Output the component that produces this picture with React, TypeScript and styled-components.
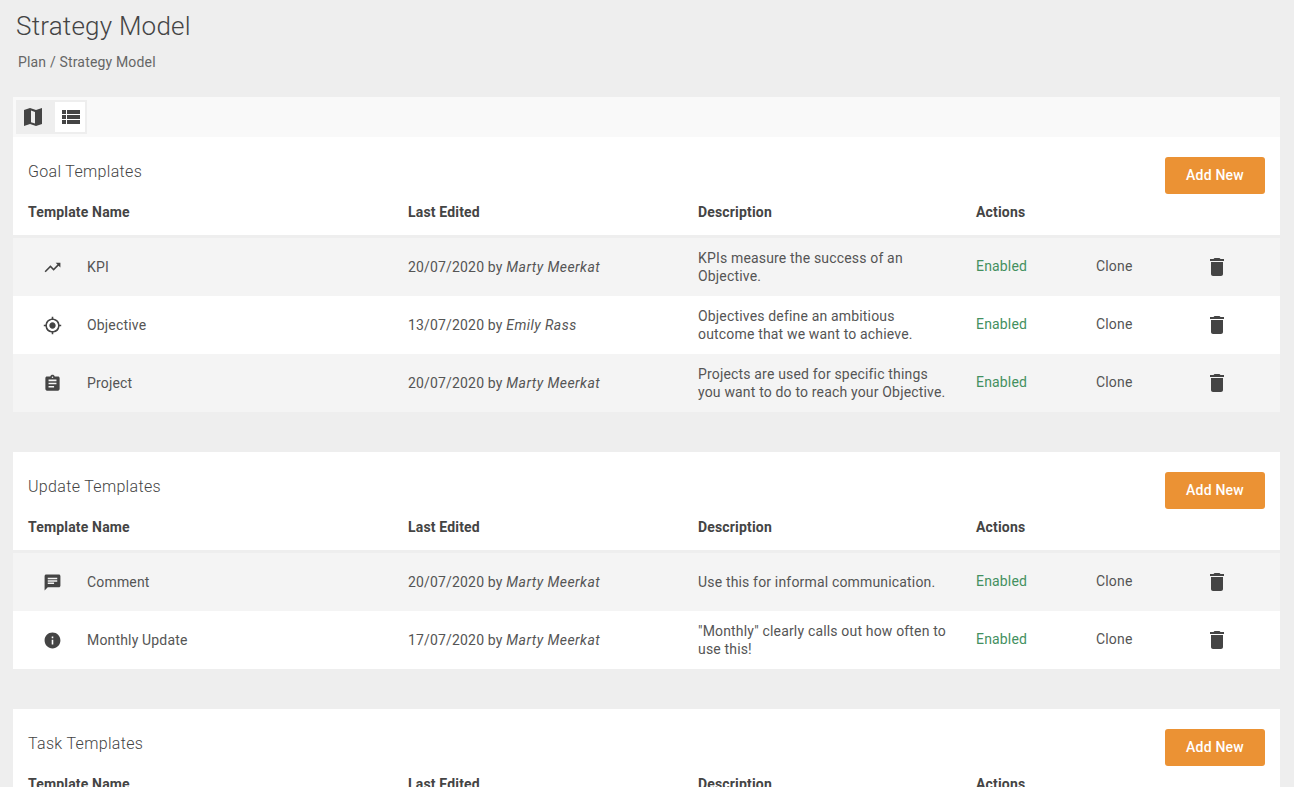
import React from "react";
import styled, { createGlobalStyle } from "styled-components";
import { MdTrendingUp, MdGpsFixed, MdAssignment, MdChat, MdInfo, MdDelete } from "react-icons/md";

const Global = createGlobalStyle`
  html, body { margin: 0; padding: 0; height: 100%; overflow: hidden; background: #eeeeee; }
  body { font-family: Roboto, "Liberation Sans", sans-serif; color: #444444; font-size: 14px; letter-spacing: 0.17px; }
`;
const Page = styled.div`
  height: 787px;
  overflow: hidden;
  padding: 0 14px 0 13px;
`;
const Title = styled.h1`
  margin: 0;
  padding: 9px 0 0 3px;
  font-size: 26px;
  line-height: 34px;
  font-weight: 300;
  letter-spacing: 0.22px;
  color: #444;
`;
const Crumbs = styled.div`
  padding: 11px 0 0 5px;
  height: 54px;
  box-sizing: border-box;
  line-height: 17px;
  font-size: 14px;
  color: #666;
`;
const Toolbar = styled.div`
  height: 40px;
  background: #f9f9f9;
  display: flex;
  align-items: center;
  padding-left: 3px;
`;
const ToggleGroup = styled.div`
  display: flex;
  height: 34px;
`;
const Toggle = styled.button<{ $active?: boolean }>`
  width: ${p => (p.$active ? 37 : 34)}px;
  height: 34px;
  padding: ${p => (p.$active ? "0 3px 0 0" : "0 0 0 2px")};
  border: 2px solid #eeeeee;
  background: ${p => (p.$active ? "#eeeeee" : "#ffffff")};
  color: #444;
  display: flex;
  align-items: center;
  justify-content: center;
  svg { width: 24px; height: 24px; flex: none; fill: currentColor; }
`;
const Section = styled.section`
  background: #fff;
  margin-bottom: 40px;
`;
const SectionHead = styled.div`
  display: flex;
  justify-content: space-between;
  align-items: flex-start;
  padding: 20px 15px 0;
  height: 57px;
  box-sizing: border-box;
`;
const SectionTitle = styled.h2`
  margin: 5px 0 0;
  font-size: 16px;
  line-height: 19px;
  font-weight: 300;
  letter-spacing: 0.33px;
  color: #444;
`;
const AddButton = styled.button`
  width: 100px;
  height: 37px;
  padding: 0 0 2px;
  border: 0;
  border-radius: 3px;
  background: #eb9234;
  color: #fff;
  font: 500 14px Roboto, sans-serif;
  letter-spacing: 0.2px;
`;
const Row = styled.div`
  display: grid;
  grid-template-columns: 380px 290px 278px 120px 109px 1fr;
  padding-left: 15px;
  align-items: center;
`;
const HeadRow = styled(Row)`
  height: 44px;
  padding-bottom: 6px;
  box-sizing: border-box;
  border-bottom: 3px solid #eeeeee;
  font-weight: 700;
  font-size: 14px;
  color: #444;
`;
const BodyRow = styled(Row)`
  height: 58px;
  &:nth-child(odd) { background: #f4f4f4; }
`;
const Rows = styled.div``;
const NameCell = styled.div`
  display: flex;
  align-items: center;
  color: #555;
  svg { width: 19px; height: 19px; color: #444; margin: 0 25px 0 15px; flex: none; }
`;
const Edited = styled.div`
  color: #555;
  em { color: #555; font-style: italic; letter-spacing: 0.45px; }
`;
const Desc = styled.div`
  width: 252px;
  line-height: 18px;
  color: #555;
`;
const Enabled = styled.div`
  color: #43905f;
  margin-top: -2px;
`;
const Clone = styled.div`
  color: #555;
  margin-top: -2px;
`;
const Trash = styled.div`
  display: flex;
  margin-top: -1px;
  color: #444;
  svg { width: 24px; height: 24px; }
`;

const MapIcon = () => (
  <svg viewBox="0 0 24 24">
    <path fillRule="evenodd" d="M3 5 9 3l6 2 6-2v16l-6 2-6-2-6 2zM10 5.6v11.6l4 1.3V6.9z" />
  </svg>
);
const ListIcon = () => (
  <svg viewBox="0 0 24 24">
    <path d="M3 14h4v-4H3v4zm0 5h4v-4H3v4zM3 9h4V5H3v4zm5 5h13v-4H8v4zm0 5h13v-4H8v4zM8 5v4h13V5H8z" />
  </svg>
);

type T = { icon: React.ReactNode; name: string; date: string; by: string; desc: string };
const goals: T[] = [
  { icon: <MdTrendingUp />, name: "KPI", date: "20/07/2020", by: "Marty Meerkat", desc: "KPIs measure the success of an Objective." },
  { icon: <MdGpsFixed />, name: "Objective", date: "13/07/2020", by: "Emily Rass", desc: "Objectives define an ambitious outcome that we want to achieve." },
  { icon: <MdAssignment />, name: "Project", date: "20/07/2020", by: "Marty Meerkat", desc: "Projects are used for specific things you want to do to reach your Objective." },
];
const updates: T[] = [
  { icon: <MdChat />, name: "Comment", date: "20/07/2020", by: "Marty Meerkat", desc: "Use this for informal communication." },
  { icon: <MdInfo />, name: "Monthly Update", date: "17/07/2020", by: "Marty Meerkat", desc: "\"Monthly\" clearly calls out how often to use this!" },
];

const Block = ({ title, rows }: { title: string; rows: T[] }) => (
  <Section>
    <SectionHead>
      <SectionTitle>{title}</SectionTitle>
      <AddButton>Add New</AddButton>
    </SectionHead>
    <HeadRow>
      <div>Template Name</div>
      <div>Last Edited</div>
      <div>Description</div>
      <div>Actions</div>
    </HeadRow>
    <Rows>
      {rows.map(r => (
        <BodyRow key={r.name}>
          <NameCell>{r.icon}{r.name}</NameCell>
          <Edited>{r.date} by <em>{r.by}</em></Edited>
          <Desc>{r.desc}</Desc>
          <Enabled>Enabled</Enabled>
          <Clone>Clone</Clone>
          <Trash><MdDelete /></Trash>
        </BodyRow>
      ))}
    </Rows>
  </Section>
);

export default function App() {
  return (
    <Page>
      <Global />
      <Title>Strategy Model</Title>
      <Crumbs>Plan / Strategy Model</Crumbs>
      <Toolbar>
        <ToggleGroup>
          <Toggle $active><MapIcon /></Toggle>
          <Toggle><ListIcon /></Toggle>
        </ToggleGroup>
      </Toolbar>
      <Block title="Goal Templates" rows={goals} />
      <Block title="Update Templates" rows={updates} />
      <Block title="Task Templates" rows={[]} />
    </Page>
  );
}
